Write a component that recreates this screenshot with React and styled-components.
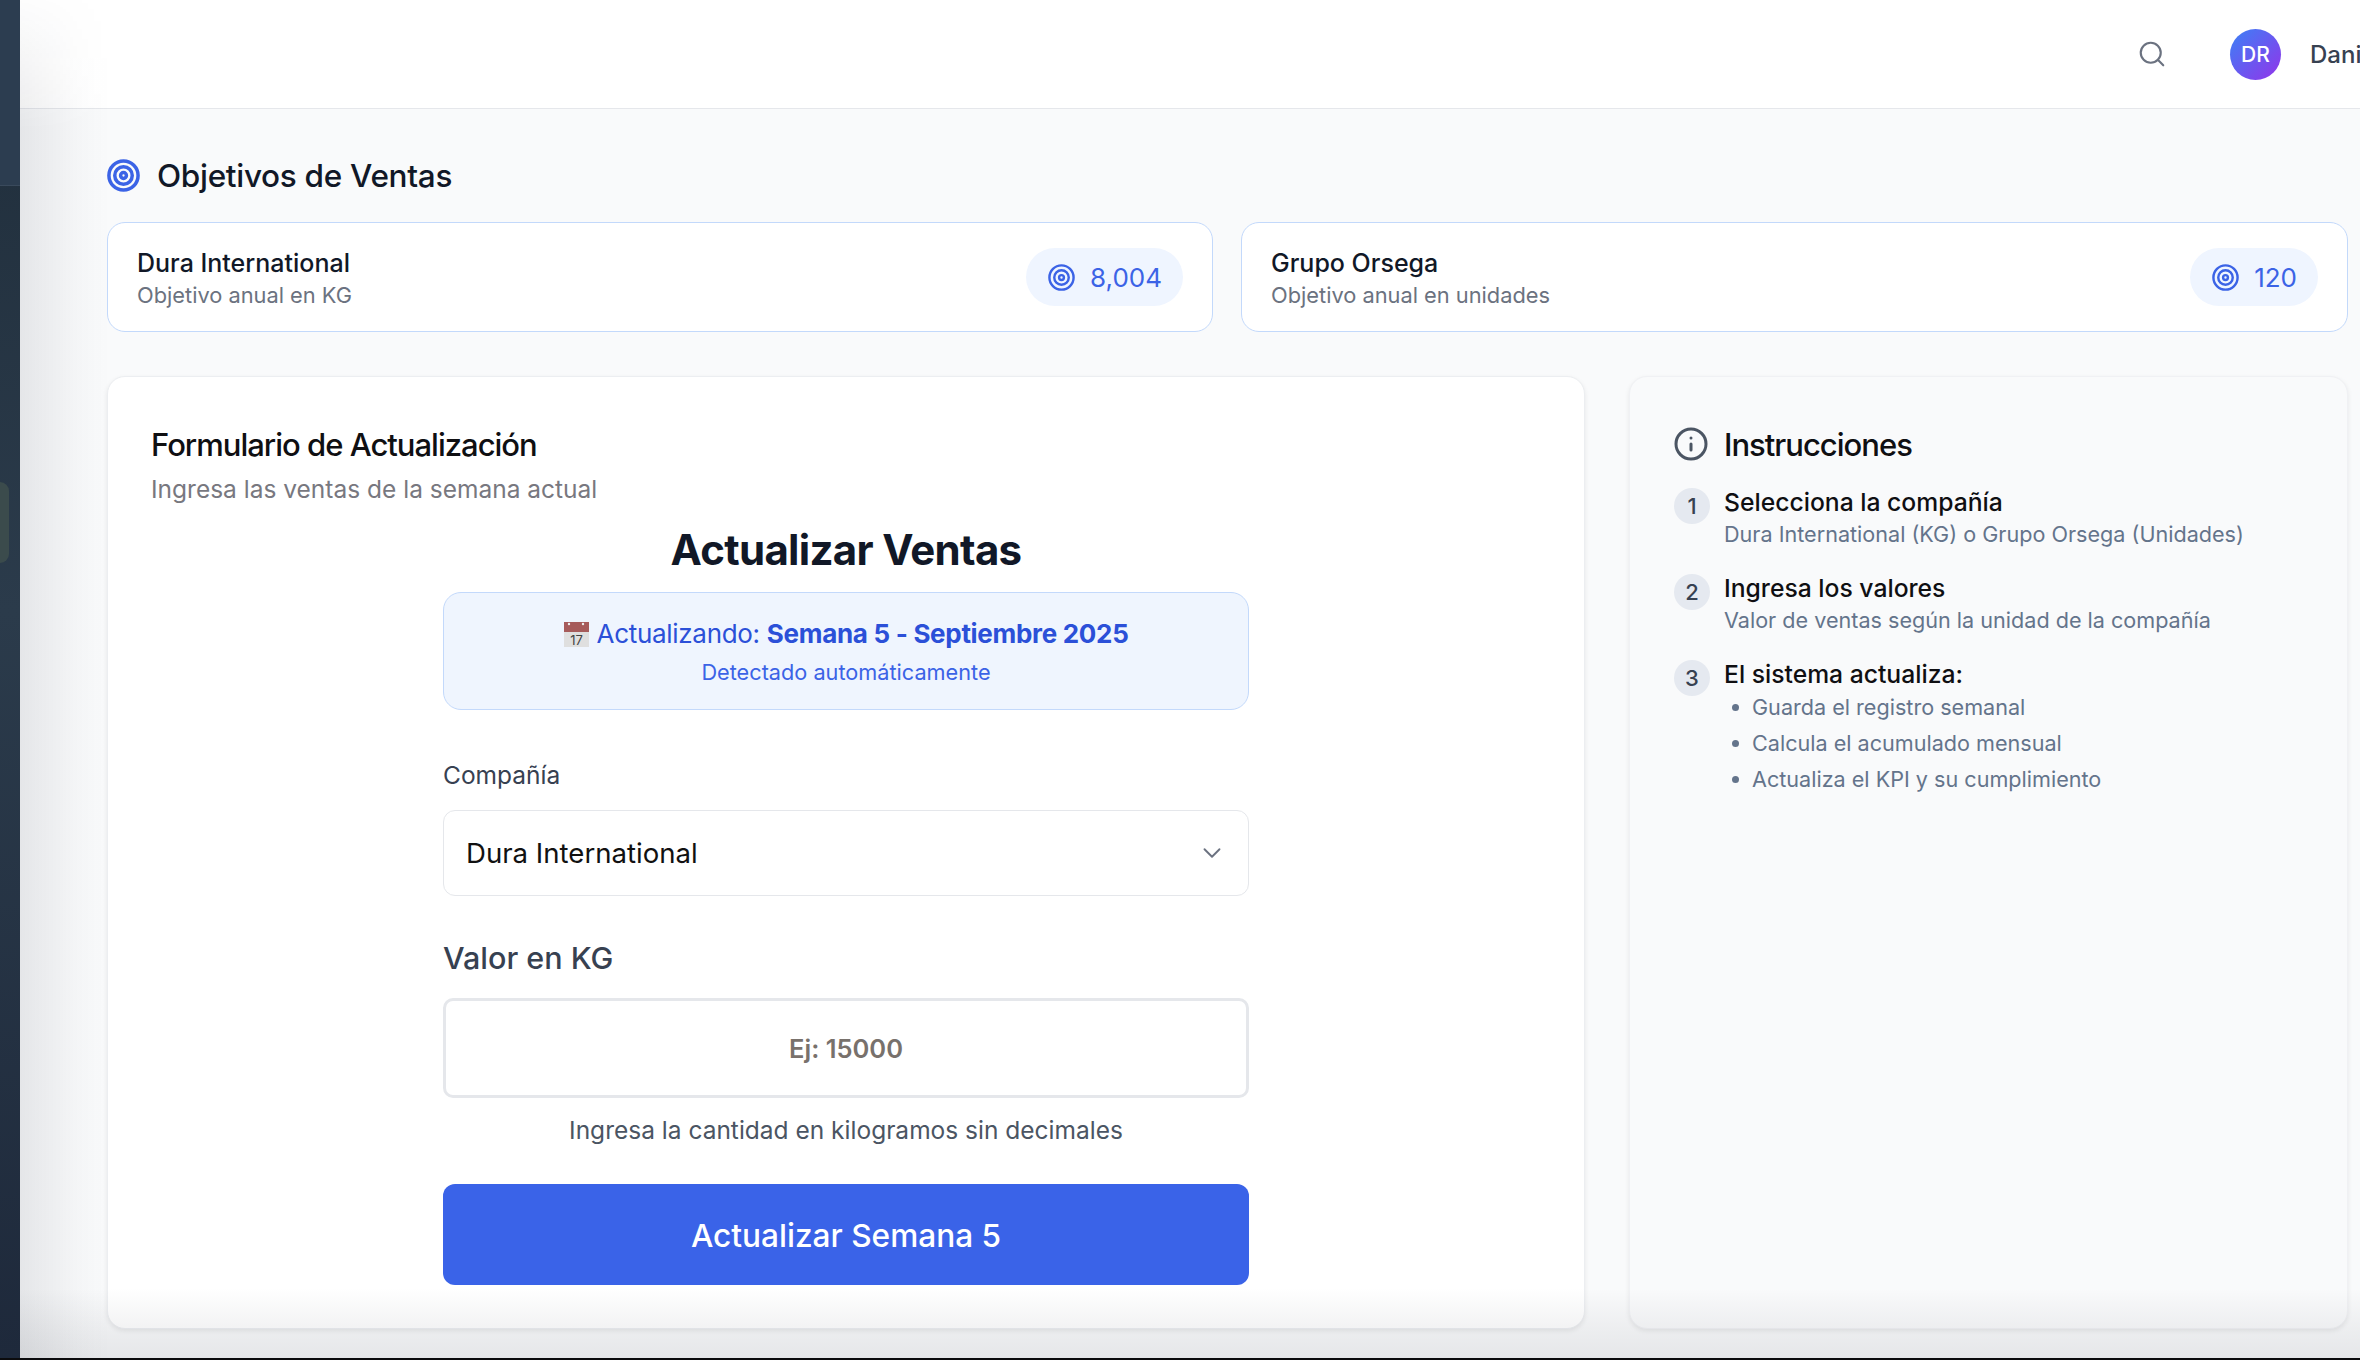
import React from "react";
import styled, { createGlobalStyle } from "styled-components";
import { Target, Search, Info, ChevronDown } from "lucide-react";

const Global = createGlobalStyle`
  html, body { margin: 0; padding: 0; background: #000; }
  * { box-sizing: border-box; }
  body { font-family: Inter, "Noto Sans", "Liberation Sans", sans-serif; }
`;

const Page = styled.div`
  width: 2360px; height: 1360px; overflow: hidden;
  display: flex; flex-direction: column; background: #000;
`;
const Window = styled.div`
  position: relative; height: 1358px; display: flex; overflow: hidden;
`;
const Sidebar = styled.aside`
  width: 20px; flex-shrink: 0; display: flex; flex-direction: column;
  background: linear-gradient(180deg, #1f2d3a 0%, #2b3b4b 45%, #1e293b 100%);
`;
const SidebarHead = styled.div`
  height: 186px; flex-shrink: 0; background: #2c3d50; border-bottom: 1px solid #3a4a5c;
`;
const SidebarNav = styled.nav`
  padding-top: 296px;
`;
const NavPill = styled.div`
  width: 9px; height: 81px; background: #3b4b4c; border-radius: 0 9px 9px 0;
`;
const Main = styled.main`
  flex: 1; min-width: 0; display: flex; flex-direction: column; background: #f9fafb;
`;
const Header = styled.header`
  height: 109px; flex-shrink: 0; background: #fff; border-bottom: 1px solid #e5e7eb;
  display: flex; justify-content: flex-end; align-items: center;
`;
const UserArea = styled.div`
  width: 223px; flex-shrink: 0; display: flex; align-items: center; overflow: hidden;
  color: #6b7280; white-space: nowrap;
  svg { flex-shrink: 0; }
`;
const Avatar = styled.div`
  width: 51px; height: 51px; margin-left: 63px; flex-shrink: 0; border-radius: 50%;
  background: linear-gradient(135deg, #3b82f6, #9333ea);
  display: flex; align-items: center; justify-content: center;
  color: #fff; font-size: 21px; font-weight: 500;
`;
const UserName = styled.span`
  margin-left: 29px; font-size: 24px; font-weight: 500; color: #374151; flex-shrink: 0;
`;
const Content = styled.div`
  padding: 49px 12px 0 87px; display: flex; flex-direction: column;
`;
const SectionTitle = styled.div`
  display: flex; align-items: center; height: 34px; gap: 16px; margin-left: -1px;
  color: #111827; font-size: 31.5px; font-weight: 500; letter-spacing: -0.3px;
  svg { color: #3b63e6; flex-shrink: 0; }
`;
const Goals = styled.div`
  margin-top: 30px; display: grid; grid-template-columns: 1106px 1107px; gap: 28px;
`;
const GoalCard = styled.div`
  height: 110px; background: #fff; border: 1.5px solid #c3d9fb; border-radius: 18px;
  padding: 2px 29px 0; display: flex; align-items: center; justify-content: space-between;
`;
const GoalName = styled.div`
  font-size: 25px; font-weight: 500; color: #111827; line-height: 34px;
`;
const GoalSub = styled.div`
  font-size: 21.8px; color: #6b7280; line-height: 30px;
`;
const GoalPill = styled.div`
  height: 58px; margin-top: -2px; padding: 0 21px; border-radius: 29px; background: #eff5ff;
  display: flex; align-items: center; gap: 14px;
  color: #3b63e6; font-size: 26px; font-weight: 400;
`;
const Columns = styled.div`
  margin-top: 44px; display: grid; grid-template-columns: 1478px 719px; gap: 44px; height: 953px;
`;
const FormCard = styled.section`
  background: #fff; border: 1px solid #eceef1; border-radius: 18px;
  box-shadow: 0 2px 5px rgba(0,0,0,.08);
  padding: 48px 43px 0;
  display: flex; flex-direction: column;
`;
const CardTitle = styled.h2`
  margin: 0; font-size: 31px; font-weight: 500; line-height: 40px; color: #0f0f12;
  letter-spacing: -1px;
`;
const CardSub = styled.p`
  margin: 6.5px 0 0; font-size: 24.5px; line-height: 34px; color: #78787f;
`;
const FormBody = styled.div`
  width: 806px; align-self: center; display: flex; flex-direction: column;
`;
const FormHeading = styled.h3`
  margin: 17.5px 0 0; text-align: center; font-size: 42px; line-height: 54px; font-weight: 700;
  color: #111827; letter-spacing: -0.7px;
`;
const Banner = styled.div`
  margin-top: 15px; height: 118px; background: #eff5fe; border: 1.5px solid #c3d9fb; border-radius: 18px;
  display: flex; flex-direction: column; align-items: center; padding-top: 23px;
`;
const BannerLine = styled.div`
  display: flex; align-items: center; font-size: 26px; line-height: 36px; color: #2b50d8;
  white-space: pre; letter-spacing: -0.3px;
  b { font-weight: 700; }
  svg { margin-right: 8px; }
`;
const BannerNote = styled.div`
  margin-top: 5px; font-size: 21.7px; line-height: 30px; color: #3b63e6;
`;
const SmallLabel = styled.label`
  display: block; margin-top: 48px; font-size: 24.5px; line-height: 34px; color: #374151;
`;
const SelectBox = styled.div`
  margin-top: 18px; height: 86px; border: 1.5px solid #e5e7eb; border-radius: 12px; background: #fff;
  padding: 0 21px 0 22px; display: flex; align-items: center; justify-content: space-between;
  font-size: 27.6px; color: #111;
  svg { color: #6b7280; }
`;
const BigLabel = styled.label`
  display: block; margin-top: 42px; font-size: 30.5px; line-height: 40px; font-weight: 500; color: #374151;
`;
const NumberInput = styled.input`
  margin-top: 20px; width: 100%; height: 100px; border: 3px solid #e5e7eb; border-radius: 10px; background: #fff;
  text-align: center; font-family: inherit; font-size: 25.5px; font-weight: 600; outline: none;
  &::placeholder { color: #78716c; opacity: 1; }
`;
const Help = styled.p`
  margin: 15px 0 0; text-align: center; font-size: 24.5px; line-height: 34px; color: #4b5563;
`;
const SubmitButton = styled.button`
  margin-top: 37px; width: 100%; height: 101px; border: 0; border-radius: 12px; background: #3a63e8;
  padding: 2px 0 0;
  color: #fff; font-family: inherit; font-size: 31.6px; font-weight: 500;
`;
const HelpCard = styled.section`
  background: #f9fafb; border: 1px solid #f0f1f4; border-radius: 18px;
  box-shadow: 0 2px 5px rgba(0,0,0,.08);
  padding: 47px 0 0 44px;
`;
const HelpTitle = styled.h2`
  margin: 0 0 24px; display: flex; align-items: center; gap: 15px; height: 40px;
  font-size: 31px; font-weight: 500; color: #0f0f12; letter-spacing: -1px;
  svg { color: #4b5563; flex-shrink: 0; margin-left: -1px; }
`;
const Step = styled.div`
  display: flex; align-items: flex-start; gap: 14px; margin-bottom: 23px;
`;
const StepNum = styled.div`
  width: 36px; height: 36px; flex-shrink: 0; border-radius: 50%; background: #e5e9f0;
  display: flex; align-items: center; justify-content: center;
  font-size: 22px; font-weight: 500; color: #374151;
`;
const StepBody = styled.div`
  margin-top: -1px; display: flex; flex-direction: column;
`;
const StepTitle = styled.div`
  font-size: 24.7px; line-height: 30px; font-weight: 500; color: #0f0f12;
`;
const StepDesc = styled.div`
  margin-top: 1px; font-size: 21.6px; line-height: 33px; color: #64748b;
`;
const Bullets = styled.ul`
  margin: 0; padding: 0; list-style: none;
`;
const Bullet = styled.li`
  display: flex; align-items: center; gap: 13px; height: 36px; padding-left: 8px;
  font-size: 21.6px; color: #64748b;
  &::before { content: ""; width: 7px; height: 7px; border-radius: 50%; background: #64748b; }
`;
const EdgeShade = styled.div`
  position: absolute; top: 0; bottom: 0; left: 20px; width: 90px; pointer-events: none;
  background: linear-gradient(90deg, rgba(20,24,40,.085), rgba(20,24,40,.02) 65%, rgba(20,24,40,0));
  -webkit-mask-image: linear-gradient(180deg, rgba(0,0,0,.1), #000 130px);
  mask-image: linear-gradient(180deg, rgba(0,0,0,.1), #000 130px);
`;
const BottomShade = styled.div`
  position: absolute; left: 20px; right: 0; bottom: 0; height: 70px; pointer-events: none;
  background: linear-gradient(0deg, rgba(20,24,40,.085), rgba(20,24,40,.05) 45%, rgba(20,24,40,0));
`;
const BlackEdge = styled.div`
  height: 2px; background: #0b0b0d;
`;

const CalendarEmoji = () => (
  <svg width="25" height="25" viewBox="0 0 25 25">
    <rect x="0" y="0" width="25" height="10" fill="#a65b5b" />
    <rect x="0" y="10" width="25" height="15" fill="#dfdfdf" />
    <circle cx="5" cy="2" r="1.2" fill="#eee" />
    <circle cx="19" cy="2" r="1.2" fill="#eee" />
    <text x="12.5" y="22.5" textAnchor="middle" fontSize="13" letterSpacing="0" fontFamily="Inter, sans-serif" fill="#444">17</text>
  </svg>
);

export default function App() {
  return (
    <Page>
      <Global />
      <Window>
        <Sidebar>
          <SidebarHead />
          <SidebarNav><NavPill /></SidebarNav>
        </Sidebar>
        <Main>
          <Header>
            <UserArea>
              <Search size={30} strokeWidth={1.7} />
              <Avatar>DR</Avatar>
              <UserName>Daniel Rodríguez</UserName>
            </UserArea>
          </Header>
          <Content>
            <SectionTitle><Target size={35} strokeWidth={2.4} />Objetivos de Ventas</SectionTitle>
            <Goals>
              <GoalCard>
                <div><GoalName>Dura International</GoalName><GoalSub>Objetivo anual en KG</GoalSub></div>
                <GoalPill><Target size={29} strokeWidth={2} />8,004</GoalPill>
              </GoalCard>
              <GoalCard>
                <div><GoalName>Grupo Orsega</GoalName><GoalSub>Objetivo anual en unidades</GoalSub></div>
                <GoalPill><Target size={29} strokeWidth={2} />120</GoalPill>
              </GoalCard>
            </Goals>
            <Columns>
              <FormCard>
                <CardTitle>Formulario de Actualización</CardTitle>
                <CardSub>Ingresa las ventas de la semana actual</CardSub>
                <FormBody>
                  <FormHeading>Actualizar Ventas</FormHeading>
                  <Banner>
                    <BannerLine><CalendarEmoji />Actualizando: <b>Semana 5 - Septiembre 2025</b></BannerLine>
                    <BannerNote>Detectado automáticamente</BannerNote>
                  </Banner>
                  <SmallLabel>Compañía</SmallLabel>
                  <SelectBox>Dura International<ChevronDown size={30} strokeWidth={1.5} /></SelectBox>
                  <BigLabel>Valor en KG</BigLabel>
                  <NumberInput placeholder="Ej: 15000" />
                  <Help>Ingresa la cantidad en kilogramos sin decimales</Help>
                  <SubmitButton>Actualizar Semana 5</SubmitButton>
                </FormBody>
              </FormCard>
              <HelpCard>
                <HelpTitle><Info size={36} strokeWidth={2} />Instrucciones</HelpTitle>
                <Step>
                  <StepNum>1</StepNum>
                  <StepBody>
                    <StepTitle>Selecciona la compañía</StepTitle>
                    <StepDesc>Dura International (KG) o Grupo Orsega (Unidades)</StepDesc>
                  </StepBody>
                </Step>
                <Step>
                  <StepNum>2</StepNum>
                  <StepBody>
                    <StepTitle>Ingresa los valores</StepTitle>
                    <StepDesc>Valor de ventas según la unidad de la compañía</StepDesc>
                  </StepBody>
                </Step>
                <Step>
                  <StepNum>3</StepNum>
                  <StepBody>
                    <StepTitle>El sistema actualiza:</StepTitle>
                    <Bullets>
                      <Bullet>Guarda el registro semanal</Bullet>
                      <Bullet>Calcula el acumulado mensual</Bullet>
                      <Bullet>Actualiza el KPI y su cumplimiento</Bullet>
                    </Bullets>
                  </StepBody>
                </Step>
              </HelpCard>
            </Columns>
          </Content>
        </Main>
        <EdgeShade />
        <BottomShade />
      </Window>
      <BlackEdge />
    </Page>
  );
}
